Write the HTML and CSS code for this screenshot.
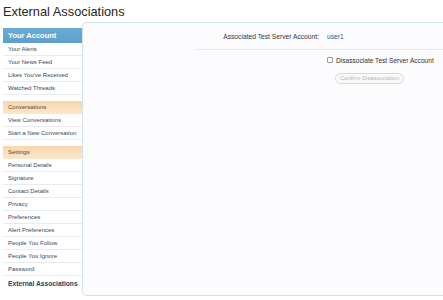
FILE: index.html
```html
<!DOCTYPE html>
<html>
<head>
<meta charset="utf-8">
<link rel="stylesheet" href="styles.css">
</head>
<body>
<h1 class="title">External Associations</h1>
<div class="main">
  <nav class="sidebar">
    <div class="sec-head blue">Your Account</div>
    <ul class="links">
      <li>Your Alerts</li>
      <li>Your News Feed</li>
      <li>Likes You've Received</li>
      <li>Watched Threads</li>
    </ul>
    <div class="sec-head orange">Conversations</div>
    <ul class="links">
      <li>View Conversations</li>
      <li>Start a New Conversation</li>
    </ul>
    <div class="sec-head orange">Settings</div>
    <ul class="links last">
      <li>Personal Details</li>
      <li>Signature</li>
      <li>Contact Details</li>
      <li>Privacy</li>
      <li>Preferences</li>
      <li>Alert Preferences</li>
      <li>People You Follow</li>
      <li>People You Ignore</li>
      <li>Password</li>
      <li class="current">External Associations</li>
    </ul>
  </nav>
  <section class="panel">
    <div class="ctrl">
      <div class="label">Associated Test Server Account:</div>
      <div class="value">user1</div>
    </div>
    <div class="submit">
      <label class="check"><input type="checkbox" class="box"><span>Disassociate Test Server Account</span></label>
      <button class="btn" disabled>Confirm Disassociation</button>
    </div>
  </section>
</div>
</body>
</html>
```

FILE: styles.css
```css
html, body {
  margin: 0;
  padding: 0;
  background: #ffffff;
  font-family: "Liberation Sans", Arial, sans-serif;
}
.title {
  margin: 0;
  padding: 2px 0 0 3px;
  height: 20px;
  line-height: 20px;
  font-size: 12.8px;
  font-weight: normal;
  color: #262626;
}
.main {
  display: flex;
  padding-left: 3px;
}
.sidebar {
  width: 79px;
  margin-top: 6px;
  flex: none;
}
.sec-head {
  padding-left: 5px;
  font-size: 6px;
  height: 13px;
  line-height: 13px;
  color: #5b4632;
}
.sec-head.blue {
  height: 15px;
  line-height: 15px;
  font-size: 7.5px;
  font-weight: bold;
  color: #ffffff;
  background: linear-gradient(#6aaad6, #5f9fcd);
}
.sec-head.orange {
  background: linear-gradient(#f8d6aa, #fbe7cc);
}
.links {
  list-style: none;
  margin: 0 0 6px 0;
  padding: 0;
  background: #ffffff;
}
.links li {
  height: 12px;
  line-height: 12px;
  border-bottom: 1px solid #e6ebf0;
  padding-left: 5px;
  font-size: 6px;
  color: #34485c;
  white-space: nowrap;
}
.links.last {
  margin-bottom: 0;
}
.links li.current {
  height: 16px;
  line-height: 16px;
  font-size: 6.7px;
  font-weight: bold;
  color: #2b4259;
  border-bottom: none;
}
.panel {
  flex: 1;
  height: 272px;
  border: 1px solid #d2e2e8;
  border-right: none;
  border-radius: 5px 0 0 5px;
  background: #fcfcff;
}
.ctrl {
  display: flex;
  align-items: center;
  height: 26px;
  font-size: 6.7px;
  color: #333333;
}
.label {
  width: 236px;
  text-align: right;
  flex: none;
}
.value {
  margin-left: 8px;
  color: #2e5595;
}
.submit {
  margin-left: 112px;
  border-top: 1px solid #e3e8ee;
  padding-top: 6px;
  padding-left: 132px;
}
.check {
  display: flex;
  align-items: center;
  height: 8px;
  font-size: 6.6px;
  color: #333333;
  white-space: nowrap;
}
.box {
  -webkit-appearance: none;
  appearance: none;
  width: 6px;
  height: 6px;
  margin: 0 3px 0 0;
  border: 1px solid #9a9a9a;
  border-radius: 1px;
  background: #fafafa;
  box-sizing: border-box;
}
.btn {
  display: block;
  margin: 9px 0 0 8px;
  padding: 0 4px;
  height: 11px;
  line-height: 9px;
  font-family: "Liberation Sans", Arial, sans-serif;
  font-size: 5.8px;
  color: #b5b5b5;
  background: #fafafa;
  border: 1px solid #d8d8d8;
  border-radius: 6px;
}
```
